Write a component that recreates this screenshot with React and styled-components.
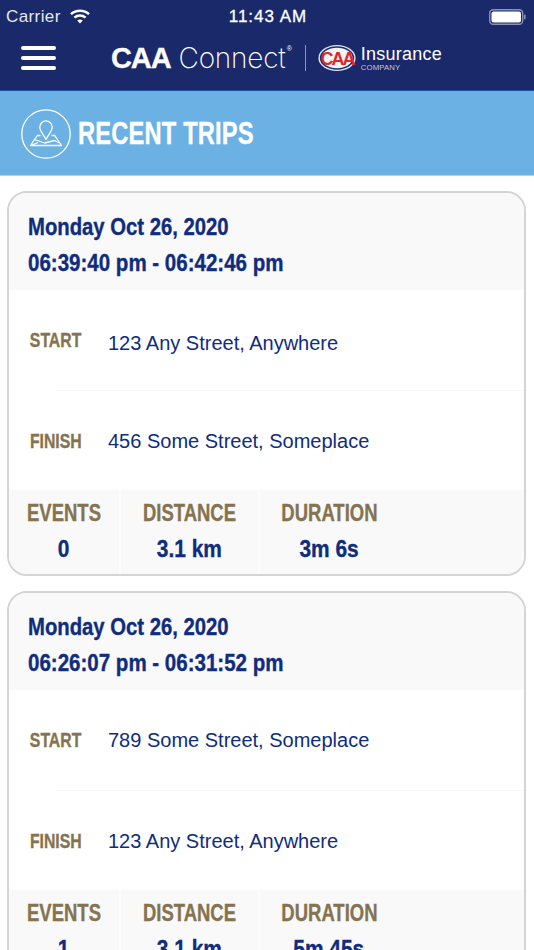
import React from "react";
import styled, { createGlobalStyle } from "styled-components";

const sans = `"Liberation Sans", Arial, sans-serif`;

const GlobalStyle = createGlobalStyle`
    html, body {
        margin: 0;
        height: 950px;
        overflow: hidden;
        background: #fff;
        font-family: ${sans};
    }
    * {
        box-sizing: border-box;
    }
`;

// no condensed face is installed, so the bold sans gets squeezed
const Condensed = styled.span`
    display: inline-block;
    white-space: nowrap;
    font-weight: 700;
    -webkit-text-stroke: 0.35px currentColor;
    transform: scaleX(${(p) => p.$x});
    transform-origin: ${(p) => p.$origin || "left"} center;
`;

const Top = styled.header`
    background: #19296a;
    height: 91px;
    border-bottom: 1px solid #1b4fa0;
    color: #fff;
`;

const StatusBar = styled.div`
    height: 33px;
    display: grid;
    grid-template-columns: 1fr auto 1fr;
    align-items: center;
    padding: 0 8px 0 6px;
    font-size: 17px;
    .left {
        display: flex;
        align-items: center;
        gap: 9px;
        letter-spacing: 0.4px;
        color: #e6e8f0;
    }
    .time {
        letter-spacing: 1px;
        margin-left: 4px;
        -webkit-text-stroke: 0.3px #fff;
    }
    .right {
        display: flex;
        justify-content: flex-end;
    }
`;

const NavBar = styled.div`
    height: 57px;
    display: flex;
    align-items: flex-start;
    padding: 11px 0 0 21px;
`;

const Burger = styled.div`
    width: 35px;
    height: 24px;
    margin-top: 2px;
    display: flex;
    flex-direction: column;
    justify-content: space-between;
    span {
        height: 4px;
        border-radius: 2px;
        background: #fff;
    }
`;

const Logo = styled.div`
    margin-left: 55px;
    display: flex;
    align-items: center;
    height: 28px;
    .caa {
        font-size: 29px;
        font-weight: 700;
        letter-spacing: -1.1px;
        -webkit-text-stroke: 0.3px #fff;
    }
    .connect {
        font-family: "Inter", ${sans};
        font-size: 28px;
        font-weight: 200;
        letter-spacing: -0.2px;
        margin-left: 8px;
    }
    .reg {
        font-size: 7px;
        align-self: flex-start;
        margin: 1px 0 0 1px;
    }
    .bar {
        width: 1px;
        height: 26px;
        background: #8d96b8;
        margin: 0 12px 0 13px;
    }
    .name {
        margin-left: 5px;
        display: flex;
        flex-direction: column;
        font-size: 18px;
        line-height: 18px;
        letter-spacing: 0.25px;
        small {
            font-size: 7.8px;
            line-height: 9px;
            letter-spacing: 0.1px;
            color: #c3c8da;
        }
    }
`;

const Banner = styled.div`
    background: #6cb1e3;
    height: 85px;
    border-bottom: 1px solid #a9d2ef;
    display: flex;
    align-items: center;
    padding: 2px 0 0 21px;
    gap: 7px;
    color: #fff;
    font-size: 31px;
    letter-spacing: 0.2px;
`;

const Trips = styled.main`
    padding: 15px 8px 0 7px;
    display: flex;
    flex-direction: column;
    gap: 15px;
`;

const Card = styled.section`
    border: 2px solid #d4d4d4;
    border-radius: 20px;
    overflow: hidden;
    background: #fff;
    flex-shrink: 0;
    height: 385px;
    display: flex;
    flex-direction: column;
`;

const CardHead = styled.div`
    background: #f9f9f9;
    height: 97px;
    padding: 16px 0 0 19px;
    font-size: 24px;
    line-height: 36px;
    color: #0f2c7e;
`;

const Row = styled.div`
    height: 100px;
    display: flex;
    align-items: center;
    position: relative;
    & + & {
        padding-top: 2px;
    }
    & + &::before {
        content: "";
        position: absolute;
        top: 0;
        left: 47px;
        right: 0;
        height: 1px;
        background: #f7f7f7;
    }
`;

const RowLabel = styled.div`
    width: 94px;
    margin-right: 5px;
    text-align: center;
    font-size: 20px;
    color: #857350;
`;

const Address = styled.div`
    font-size: 20px;
    color: #0f2c7e;
    margin-top: ${(p) => p.$drop || 0}px;
`;

const Stats = styled.div`
    flex: 1;
    background: #f9f9f9;
    display: grid;
    grid-template-columns: 112px 139px 138px;
`;

const Stat = styled.div`
    text-align: center;
    padding-top: 7px;
    border-right: 2px solid #fdfdfd;
    &:last-child {
        border-right: 0;
    }
    .label {
        font-size: 24px;
        line-height: 32px;
        color: #857350;
    }
    .value {
        font-size: 24px;
        line-height: 39px;
        color: #0f2c7e;
    }
`;

const WifiIcon = () => (
    <svg width="20" height="15" viewBox="0 0 20 15" fill="none" stroke="#fff" strokeWidth="2.4">
        <path d="M1 5.2C6 .6 14 .6 19 5.2" />
        <path d="M4.4 8.6c3.2-2.9 8-2.9 11.2 0" />
        <path d="M10 14.5l-2.8-3c1.7-1.3 3.9-1.3 5.6 0z" fill="#fff" stroke="none" />
    </svg>
);

const BatteryIcon = () => (
    <svg width="37" height="16" viewBox="0 0 37 16">
        <rect x="0.7" y="0.7" width="33" height="14.6" rx="3.5" fill="none" stroke="#8b93b5" strokeWidth="1.4" />
        <rect x="2.5" y="2.5" width="29.5" height="11" rx="2" fill="#fff" />
        <rect x="35" y="5.5" width="1.6" height="5" rx="0.8" fill="#8b93b5" />
    </svg>
);

const CaaBadge = () => (
    <svg width="38" height="28" viewBox="0 0 38 28">
        <ellipse cx="19" cy="14" rx="18.6" ry="13" fill="#e4e7ef" />
        <ellipse cx="19" cy="14" rx="17.2" ry="11.8" fill="#1a2f78" />
        <ellipse cx="19" cy="14" rx="15.4" ry="10.2" fill="#f4f4f4" />
        <text x="19" y="20.5" textAnchor="middle" fontFamily="Liberation Sans" fontWeight="700" fontSize="18" letterSpacing="-2" fill="#e0262b">
            CAA
        </text>
    </svg>
);

const TripsIcon = () => (
    <svg width="50" height="50" viewBox="0 0 50 50" fill="none" stroke="#fff" strokeWidth="1.3" strokeLinejoin="round">
        <circle cx="25" cy="25" r="24.2" />
        <path d="M25 30.5c-2-4.4-6.2-8-6.2-12.4a6.2 6.2 0 0 1 12.4 0c0 4.4-4.2 8-6.2 12.4z" />
        <path d="M19.5 26.5h-3.2L9.5 36.5h31l-6.8-10h-3.2" />
        <path d="M13.5 30.5l10 3.5 10-2.5 5 2.5M10 36.5l7-3" />
    </svg>
);

const trips = [
    {
        date: "Monday Oct 26, 2020",
        time: "06:39:40 pm - 06:42:46 pm",
        start: "123 Any Street, Anywhere",
        startDrop: 6,
        finish: "456 Some Street, Someplace",
        events: 0,
        distance: "3.1 km",
        duration: "3m 6s",
    },
    {
        date: "Monday Oct 26, 2020",
        time: "06:26:07 pm - 06:31:52 pm",
        start: "789 Some Street, Someplace",
        startDrop: 0,
        finish: "123 Any Street, Anywhere",
        events: 1,
        distance: "3.1 km",
        duration: "5m 45s",
    },
];

const stats = (trip) => [
    ["EVENTS", trip.events],
    ["DISTANCE", trip.distance],
    ["DURATION", trip.duration],
];

const App = () => {
    return (
        <>
            <GlobalStyle />
            <Top>
                <StatusBar>
                    <div className="left">
                        Carrier <WifiIcon />
                    </div>
                    <div className="time">11:43 AM</div>
                    <div className="right">
                        <BatteryIcon />
                    </div>
                </StatusBar>
                <NavBar>
                    <Burger>
                        <span />
                        <span />
                        <span />
                    </Burger>
                    <Logo>
                        <span className="caa">CAA</span>
                        <span className="connect">Connect</span>
                        <span className="reg">®</span>
                        <span className="bar" />
                        <CaaBadge />
                        <div className="name">
                            Insurance
                            <small>COMPANY</small>
                        </div>
                    </Logo>
                </NavBar>
            </Top>
            <Banner>
                <TripsIcon />
                <Condensed $x={0.765}>RECENT TRIPS</Condensed>
            </Banner>
            <Trips>
                {trips.map((trip) => (
                    <Card key={trip.time}>
                        <CardHead>
                            <div>
                                <Condensed $x={0.845}>{trip.date}</Condensed>
                            </div>
                            <div>
                                <Condensed $x={0.855}>{trip.time}</Condensed>
                            </div>
                        </CardHead>
                        <Row>
                            <RowLabel>
                                <Condensed $x={0.79} $origin="center">START</Condensed>
                            </RowLabel>
                            <Address $drop={trip.startDrop}>{trip.start}</Address>
                        </Row>
                        <Row>
                            <RowLabel>
                                <Condensed $x={0.79} $origin="center">FINISH</Condensed>
                            </RowLabel>
                            <Address>{trip.finish}</Address>
                        </Row>
                        <Stats>
                            {stats(trip).map(([label, value]) => (
                                <Stat key={label}>
                                    <div className="label">
                                        <Condensed $x={0.77} $origin="center">{label}</Condensed>
                                    </div>
                                    <div className="value">
                                        <Condensed $x={0.87} $origin="center">{value}</Condensed>
                                    </div>
                                </Stat>
                            ))}
                        </Stats>
                    </Card>
                ))}
            </Trips>
        </>
    );
};

export default App;
